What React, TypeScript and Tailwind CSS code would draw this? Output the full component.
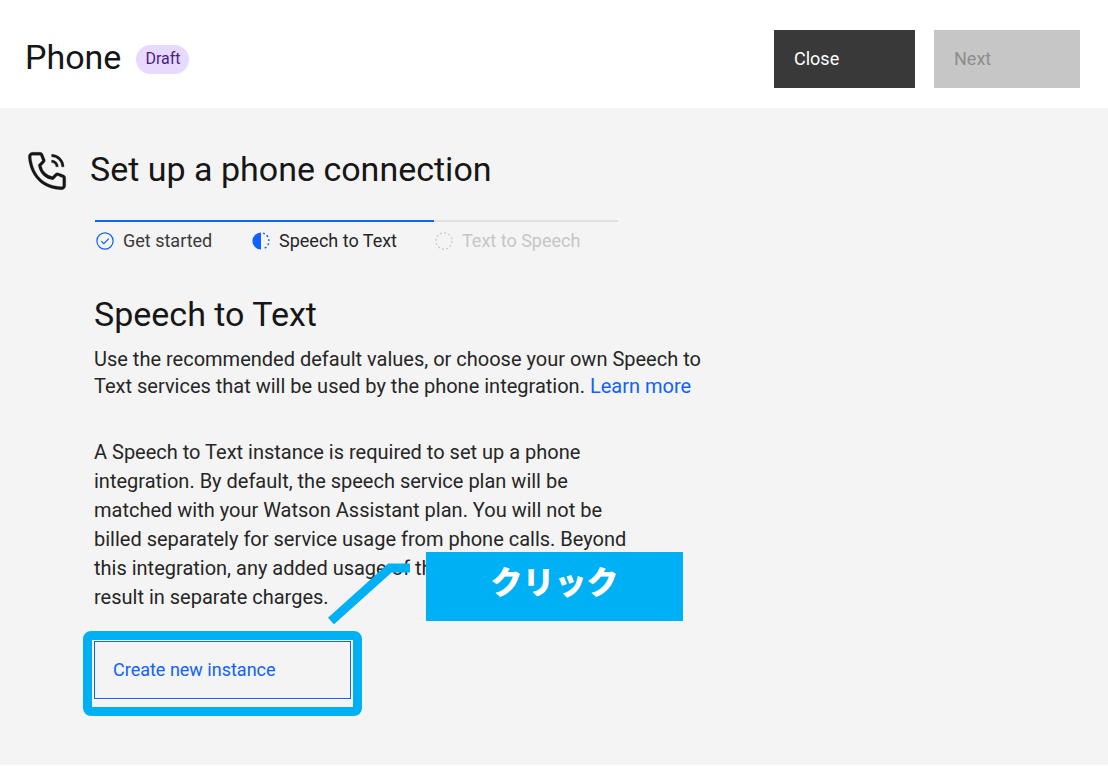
import type { ReactNode } from "react";

type StepState = "complete" | "current" | "disabled";

interface Step {
  label: string;
  state: StepState;
  width: string;
}

const steps: Step[] = [
  { label: "Get started", state: "complete", width: "w-[156px]" },
  { label: "Speech to Text", state: "current", width: "w-[183px]" },
  { label: "Text to Speech", state: "disabled", width: "w-[184px]" },
];

const stepStyle: Record<StepState, string> = {
  complete: "border-[#0f62fe] text-[#393939]",
  current: "border-[#0f62fe] text-[#262626]",
  disabled: "border-[#e0e0e0] text-[#c6c6c6]",
};

function StepIcon({ state }: { state: StepState }) {
  return (
    <svg
      viewBox="0 0 20 20"
      className={`size-5 shrink-0 ${
        state === "disabled" ? "text-[#c6c6c6]" : "text-[#0f62fe]"
      }`}
      fill="none"
      stroke="currentColor"
      aria-hidden="true"
    >
      {state === "complete" && (
        <>
          <circle cx="10" cy="10" r="8.1" strokeWidth="1.2" />
          <path d="M6.2 10.1 8.8 12.6 13.8 7.6" strokeWidth="1.3" />
        </>
      )}
      {state === "current" && (
        <>
          <path d="M10 1.4a8.6 8.6 0 0 0 0 17.2Z" fill="currentColor" stroke="none" />
          <path
            d="M12 2.2A8.1 8.1 0 0 1 12 17.8"
            strokeWidth="1.4"
            strokeDasharray="2 2.2"
          />
        </>
      )}
      {state === "disabled" && (
        <circle cx="10" cy="10" r="8.1" strokeWidth="1.2" strokeDasharray="2 2.24" />
      )}
    </svg>
  );
}

function PhoneVoiceIcon() {
  return (
    <svg
      viewBox="0 0 32 32"
      className="size-[46px] shrink-0"
      fill="currentColor"
      stroke="currentColor"
      strokeWidth="0.2"
      aria-hidden="true"
    >
      <path d="M26,29h-.17C6.18,27.87,3.39,11.29,3,6.23A3,3,0,0,1,5.76,3h5.51a2,2,0,0,1,1.86,1.26L14.65,8a2,2,0,0,1-.44,2.16l-2.13,2.15a9.37,9.37,0,0,0,7.58,7.6l2.17-2.15A2,2,0,0,1,24,17.35l3.77,1.51A2,2,0,0,1,29,20.72V26A3,3,0,0,1,26,29ZM6,5A1,1,0,0,0,5,6v.08C5.46,12,8.41,26,25.94,27A1,1,0,0,0,27,26.06V20.72l-3.77-1.51-2.87,2.85L19.88,22C11.18,20.91,10,12.21,10,12.12l-.06-.48,2.84-2.87L11.28,5Z" />
      <path d="M19.2,4.4v1.7a7,7,0,0,1,7,7h1.7A8.7,8.7,0,0,0,19.2,4.4Z" />
      <path d="M19.2,8.4v1.7a3,3,0,0,1,3,3h1.7A4.7,4.7,0,0,0,19.2,8.4Z" />
    </svg>
  );
}

function Title({ children }: { children: ReactNode }) {
  return <h2 className="pb-1 text-[34px] leading-[40px] font-normal">{children}</h2>;
}

export default function App() {
  return (
    <div className="min-h-screen flex flex-col bg-white pb-px font-['Roboto','Noto_Sans_CJK_JP',sans-serif] text-[#161616]">
      <header className="h-[108px] shrink-0 pt-2.5 pl-[25px] pr-7 flex items-center justify-between">
        <div className="flex items-center gap-[15px]">
          <h1 className="pb-1 text-[34px] leading-[40px] font-normal">Phone</h1>
          <span className="h-[29px] px-[9px] flex items-center rounded-full bg-[#e8daff] text-base text-[#491d8b]">
            Draft
          </span>
        </div>
        <div className="flex gap-[19px] text-lg">
          <button className="w-[141px] h-[58px] px-5 bg-[#393939] text-left text-white">
            Close
          </button>
          <button
            disabled
            className="w-[146px] h-[58px] px-5 bg-[#c6c6c6] text-left text-[#8d8d8d]"
          >
            Next
          </button>
        </div>
      </header>

      <main className="flex-1 bg-[#f4f4f4] pt-10 pl-6 pr-7 pb-12">
        <div className="flex items-center gap-5">
          <PhoneVoiceIcon />
          <Title>Set up a phone connection</Title>
        </div>

        <div className="pl-[70px]">
          <ol className="mt-[26px] pl-px flex text-lg">
            {steps.map((step) => (
              <li
                key={step.label}
                aria-current={step.state === "current" ? "step" : undefined}
                className={`${step.width} ${stepStyle[step.state]} pt-[5px] flex items-center gap-2 border-t-2 whitespace-nowrap`}
              >
                <StepIcon state={step.state} />
                {step.label}
              </li>
            ))}
          </ol>

          <section className="mt-[39px]">
            <Title>Speech to Text</Title>
            <p className="mt-2 text-xl leading-[27px] text-[#262626]">
              Use the recommended default values, or choose your own Speech to
              <br />
              Text services that will be used by the phone integration.{" "}
              <a href="#learn-more" className="text-[#0f62fe]">
                Learn more
              </a>
            </p>

            <div className="relative mt-[38px]">
              <p className="text-xl leading-[29px] text-[#262626]">
                A Speech to Text instance is required to set up a phone
                <br />
                integration. By default, the speech service plan will be
                <br />
                matched with your Watson Assistant plan. You will not be
                <br />
                billed separately for service usage from phone calls. Beyond
                <br />
                this integration, any added usage of th
                <br />
                result in separate charges.
              </p>
              <svg
                viewBox="0 0 84 66"
                className="absolute top-[121px] left-[233px] w-[84px] h-[66px]"
                fill="none"
                stroke="#00b0f4"
                strokeWidth="9"
                aria-hidden="true"
              >
                <path d="M4 62 63 9H83" />
              </svg>
              <div className="absolute top-[114px] left-[332px] w-[257px] h-[69px] pb-2 flex items-center justify-center bg-[#00b0f4] text-[32px] font-black text-white">
                クリック
              </div>
            </div>

            <div className="relative mt-[29px] w-[257px]">
              <button className="w-full h-[58px] px-[18px] border border-[#0f62fe] ring-1 ring-white text-left text-lg text-[#0f62fe]">
                Create new instance
              </button>
              <div className="pointer-events-none absolute -inset-x-[11px] -top-[10px] -bottom-[17px] rounded-lg border-9 border-[#00b0f4]" />
            </div>
          </section>
        </div>
      </main>
    </div>
  );
}
